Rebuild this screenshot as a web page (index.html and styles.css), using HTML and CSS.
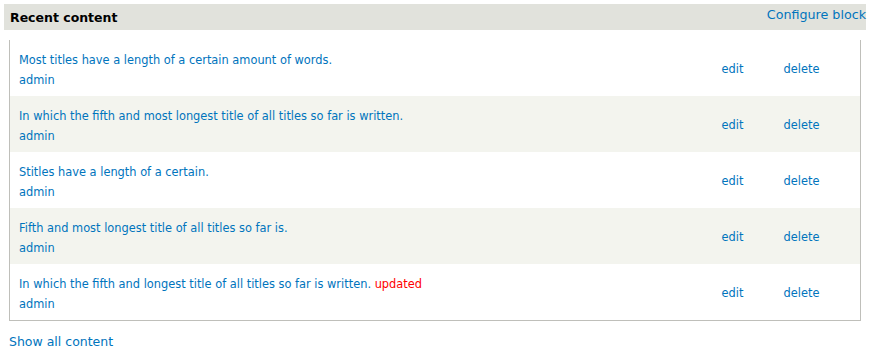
FILE: index.html
```html
<!DOCTYPE html>
<html lang="en">
<head>
    <meta charset="UTF-8">
    <title>Dashboard - Recent content</title>
    <link rel="stylesheet" href="styles.css">
</head>
<body>
    <div class="block">
        <div class="block-header">
            <h2>Recent content</h2>
            <a href="#" class="configure">Configure block</a>
        </div>
        <div class="block-body">
            <table class="recent">
                <tbody>
                    <tr>
                        <td class="title"><a href="#">Most titles have a length of a certain amount of words.</a><br><a href="#">admin</a></td>
                        <td class="op edit"><a href="#">edit</a></td>
                        <td class="op delete"><a href="#">delete</a></td>
                    </tr>
                    <tr class="even">
                        <td class="title"><a href="#">In which the fifth and most longest title of all titles so far is written.</a><br><a href="#">admin</a></td>
                        <td class="op edit"><a href="#">edit</a></td>
                        <td class="op delete"><a href="#">delete</a></td>
                    </tr>
                    <tr>
                        <td class="title"><a href="#">Stitles have a length of a certain.</a><br><a href="#">admin</a></td>
                        <td class="op edit"><a href="#">edit</a></td>
                        <td class="op delete"><a href="#">delete</a></td>
                    </tr>
                    <tr class="even">
                        <td class="title"><a href="#">Fifth and most longest title of all titles so far is.</a><br><a href="#">admin</a></td>
                        <td class="op edit"><a href="#">edit</a></td>
                        <td class="op delete"><a href="#">delete</a></td>
                    </tr>
                    <tr>
                        <td class="title"><a href="#">In which the fifth and longest title of all titles so far is written.</a> <span class="marker">updated</span><br><a href="#">admin</a></td>
                        <td class="op edit"><a href="#">edit</a></td>
                        <td class="op delete"><a href="#">delete</a></td>
                    </tr>
                </tbody>
            </table>
            <a href="#" class="show-all">Show all content</a>
        </div>
    </div>
</body>
</html>
```

FILE: styles.css
```css
* {
    box-sizing: border-box;
}

body {
    margin: 0;
    padding: 4px 5px 0 4px;
    font-family: "DejaVu Sans", Verdana, sans-serif;
    font-size: 11.4px;
    color: #333;
    background: #fff;
}

a {
    color: #0074bd;
    text-decoration: none;
}

.block-header {
    display: flex;
    justify-content: space-between;
    align-items: flex-start;
    background: #e1e2dc;
    height: 26px;
    white-space: nowrap;
}

.block-header h2 {
    margin: 0;
    padding: 6px 6px 0;
    font-size: 12.5px;
    font-weight: bold;
    color: #000;
}

.configure {
    padding-top: 3px;
    font-size: 12.7px;
}

.block-body {
    padding: 10px 5px 0 5px;
}

.recent {
    width: 100%;
    border-collapse: collapse;
    border: 1px solid #bfbfba;
    border-top: 0;
}

.recent tr {
    height: 56px;
}

.recent tr.even {
    background: #f3f4ee;
}

.recent td {
    padding: 4px 9px 0;
    line-height: 20px;
    vertical-align: middle;
}

.recent td.op {
    width: 62px;
    padding: 2px 0 0;
}

.recent td.delete {
    width: 77px;
}

.marker {
    color: #f00;
}

.show-all {
    display: inline-block;
    margin-top: 13px;
    font-size: 12.5px;
}
```
